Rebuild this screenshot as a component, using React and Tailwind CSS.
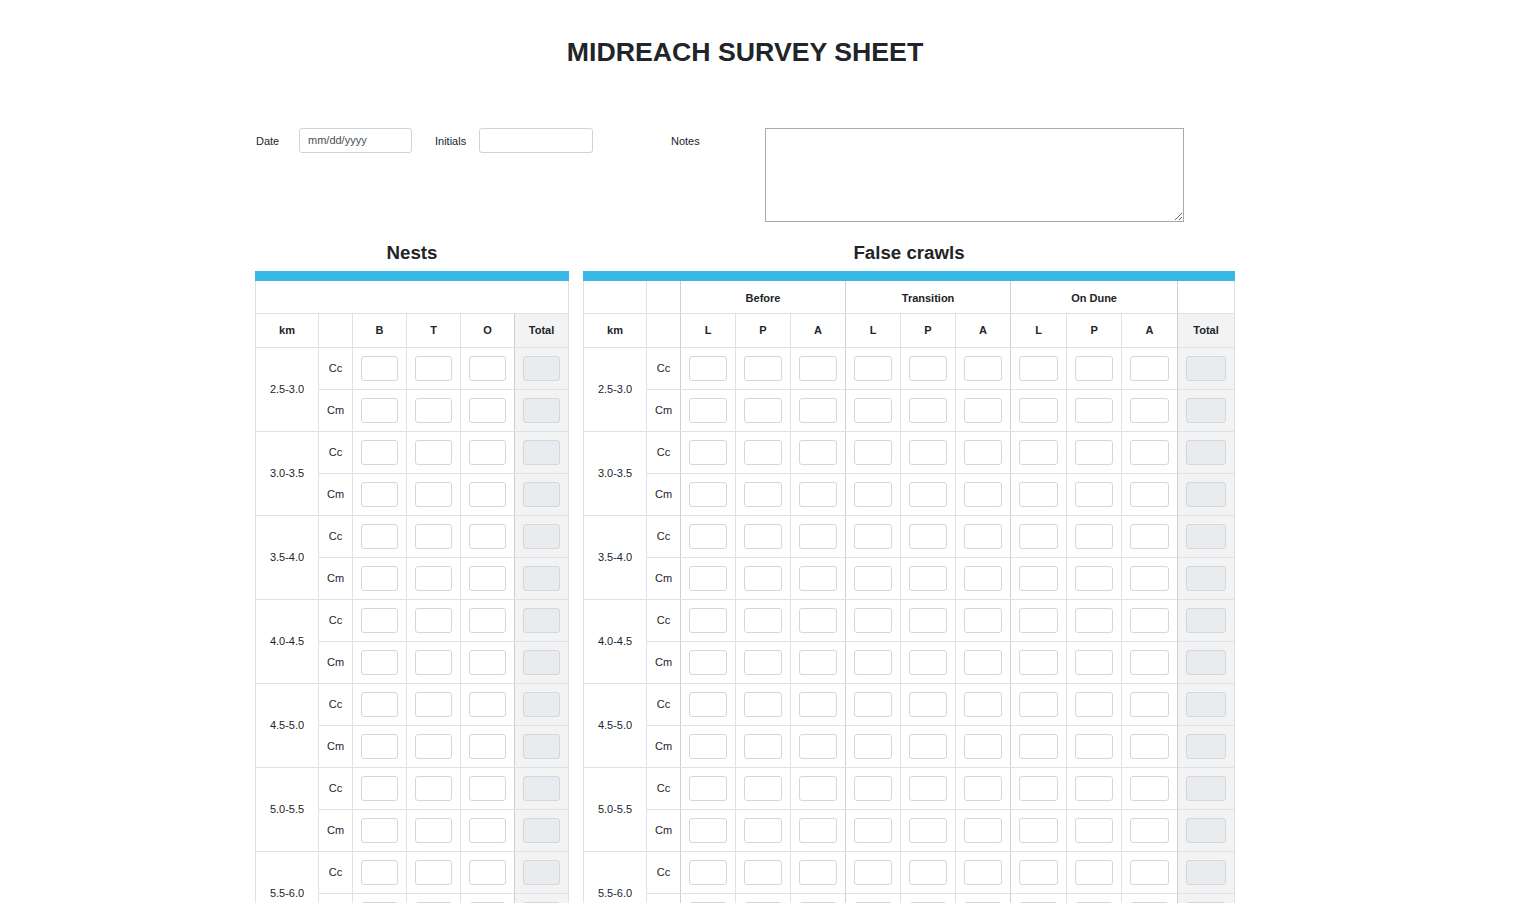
import React from 'react'

const KM = ['2.5-3.0', '3.0-3.5', '3.5-4.0', '4.0-4.5', '4.5-5.0', '5.0-5.5', '5.5-6.0', '6.0-6.5', '6.5-7.0']
const SPECIES = ['Cc', 'Cm']

const cell = 'border border-[#dee2e6] p-0 text-center align-middle'
const dark = 'border-l-[#cfcfcf]'
const darkR = 'border-r-[#cfcfcf]'

function Box({ total }) {
  return (
    <input
      type="text"
      readOnly={total}
      className={`block mx-auto w-[70%] h-[25px] rounded-[3px] border border-[#d3d7db] outline-none ${total ? 'bg-[#e9ecef]' : 'bg-white'}`}
    />
  )
}

function SectionHead({ title }) {
  return (
    <>
      <h2 className="text-center text-[18.7px] font-bold leading-[24px] text-[#212529] mb-[6px]">{title}</h2>
      <div className="h-[10px] bg-[#37b9e3]" />
    </>
  )
}

function NestsTable() {
  const cols = ['B', 'T', 'O']
  return (
    <div className="w-[314px]">
      <SectionHead title="Nests" />
      <table className="w-full table-fixed border-collapse text-[11px] text-[#212529]">
        <colgroup>
          <col className="w-[63px]" />
          <col className="w-[34px]" />
          <col className="w-[54px]" />
          <col className="w-[54px]" />
          <col className="w-[54px]" />
          <col />
        </colgroup>
        <thead>
          <tr className="h-[32px]">
            <td colSpan={6} className={`${cell} border-t-0`} />
          </tr>
          <tr className="h-[34px] font-bold">
            <th className={cell}>km</th>
            <th className={cell} />
            {cols.map((c, i) => (
              <th key={c} className={`${cell} ${i === 2 ? darkR : ''}`}>{c}</th>
            ))}
            <th className={`${cell} ${dark} bg-[#f3f3f3]`}>Total</th>
          </tr>
        </thead>
        <tbody>
          {KM.map(km =>
            SPECIES.map((sp, si) => (
              <tr key={km + sp} className="h-[42px]">
                {si === 0 && <td rowSpan={2} className={cell}>{km}</td>}
                <td className={cell}>{sp}</td>
                {cols.map((c, i) => (
                  <td key={c} className={`${cell} ${i === 2 ? darkR : ''}`}><Box /></td>
                ))}
                <td className={`${cell} ${dark} bg-[#f3f3f3]`}><Box total /></td>
              </tr>
            ))
          )}
        </tbody>
      </table>
    </div>
  )
}

function CrawlsTable() {
  const groups = ['Before', 'Transition', 'On Dune']
  const sub = ['L', 'P', 'A']
  const widths = ['w-[55px]', 'w-[55px]', 'w-[55px]', 'w-[55px]', 'w-[55px]', 'w-[55px]', 'w-[56px]', 'w-[55px]', 'w-[56px]']
  return (
    <div className="w-[652px]">
      <SectionHead title="False crawls" />
      <table className="w-full table-fixed border-collapse text-[11px] text-[#212529]">
        <colgroup>
          <col className="w-[63px]" />
          <col className="w-[34px]" />
          {widths.map((w, i) => <col key={i} className={w} />)}
          <col />
        </colgroup>
        <thead>
          <tr className="h-[32px] font-bold">
            <td className={`${cell} border-t-0`} />
            <td className={`${cell} border-t-0 ${darkR}`} />
            {groups.map(g => (
              <th key={g} colSpan={3} className={`${cell} border-t-0 ${dark} ${darkR} pt-[2px]`}>{g}</th>
            ))}
            <td className={`${cell} border-t-0 ${dark}`} />
          </tr>
          <tr className="h-[34px] font-bold">
            <th className={cell}>km</th>
            <th className={`${cell} ${darkR}`} />
            {groups.map(g =>
              sub.map((s, i) => (
                <th key={g + s} className={`${cell} ${i === 0 ? dark : ''} ${i === 2 ? darkR : ''}`}>{s}</th>
              ))
            )}
            <th className={`${cell} ${dark} bg-[#f3f3f3]`}>Total</th>
          </tr>
        </thead>
        <tbody>
          {KM.map(km =>
            SPECIES.map((sp, si) => (
              <tr key={km + sp} className="h-[42px]">
                {si === 0 && <td rowSpan={2} className={cell}>{km}</td>}
                <td className={`${cell} ${darkR}`}>{sp}</td>
                {groups.map(g =>
                  sub.map((s, i) => (
                    <td key={g + s} className={`${cell} ${i === 0 ? dark : ''} ${i === 2 ? darkR : ''}`}><Box /></td>
                  ))
                )}
                <td className={`${cell} ${dark} bg-[#f3f3f3]`}><Box total /></td>
              </tr>
            ))
          )}
        </tbody>
      </table>
    </div>
  )
}

export default function App() {
  return (
    <div className="min-h-screen bg-white font-['Liberation_Sans',Arial,sans-serif] text-[#212529]">
      <div className="w-[980px] ml-[255px] pb-10">
        <h1 className="pt-[37px] text-center text-[26.7px] font-bold leading-[30px] text-[#212529]">
          MIDREACH SURVEY SHEET
        </h1>

        {/* form row */}
        <div className="mt-[61px] flex items-start text-[11px] text-[#212529]">
          <label className="ml-[1px] w-[43px] pt-[5px]">Date</label>
          <input
            type="text"
            placeholder="mm/dd/yyyy"
            className="w-[113px] h-[25px] px-[8px] pb-[1px] rounded-[3px] border border-[#ced4da] text-[11px] placeholder:text-[#495057] outline-none"
          />
          <label className="ml-[23px] w-[44px] pt-[5px]">Initials</label>
          <input
            type="text"
            className="w-[114px] h-[25px] px-[8px] rounded-[3px] border border-[#ced4da] text-[11px] outline-none"
          />
          <label className="ml-[78px] w-[94px] pt-[5px]">Notes</label>
          <textarea className="w-[419px] h-[94px] border border-[#a9a9a9] outline-none" />
        </div>

        {/* tables */}
        <div className="mt-[19px] flex items-start gap-[14px]">
          <NestsTable />
          <CrawlsTable />
        </div>
      </div>
    </div>
  )
}
